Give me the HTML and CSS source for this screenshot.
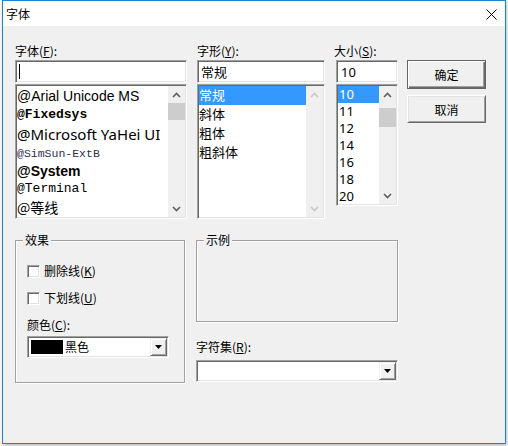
FILE: index.html
```html
<!DOCTYPE html>
<html>
<head>
<meta charset="utf-8">
<title>字体</title>
<link rel="stylesheet" href="styles.css">
</head>
<body>
<div class="window">
  <div class="titlebar">
    <span class="title">字体</span>
    <svg class="close" width="11" height="11" viewBox="0 0 11 11"><path d="M0.5 0.5L10.5 10.5M10.5 0.5L0.5 10.5" stroke="#000" stroke-width="1" fill="none"/></svg>
  </div>
  <div class="content">
    <div class="top">
      <div class="col col-font">
        <div class="label">字体(<u>F</u>):</div>
        <div class="edit"><span class="caret"></span></div>
        <div class="list list-font">
          <div class="items">
            <div class="item f-arial">@Arial Unicode MS</div>
            <div class="item f-fixed">@Fixedsys</div>
            <div class="item f-yahei">@Microsoft YaHei UI</div>
            <div class="item f-simsun">@SimSun-ExtB</div>
            <div class="item f-system">@System</div>
            <div class="item f-terminal">@Terminal</div>
            <div class="item f-dengxian">@等线</div>
          </div>
          <div class="scrollbar">
            <div class="arrow"><svg width="9" height="6" viewBox="0 0 9 6"><polyline points="1,5 4.5,1.5 8,5" fill="none" stroke="#606060" stroke-width="1.6"/></svg></div>
            <div class="track"><div class="thumb"></div></div>
            <div class="arrow"><svg width="9" height="6" viewBox="0 0 9 6"><polyline points="1,1 4.5,4.5 8,1" fill="none" stroke="#606060" stroke-width="1.6"/></svg></div>
          </div>
        </div>
      </div>
      <div class="col col-style">
        <div class="label">字形(<u>Y</u>):</div>
        <div class="edit"><span class="edit-text cjk">常规</span></div>
        <div class="list list-style">
          <div class="items">
            <div class="item s-item selected">常规</div>
            <div class="item s-item">斜体</div>
            <div class="item s-item">粗体</div>
            <div class="item s-item">粗斜体</div>
          </div>
          <div class="scrollbar">
            <div class="arrow"><svg width="9" height="6" viewBox="0 0 9 6"><polyline points="1,5 4.5,1.5 8,5" fill="none" stroke="#c8c8c8" stroke-width="1.6"/></svg></div>
            <div class="track"></div>
            <div class="arrow"><svg width="9" height="6" viewBox="0 0 9 6"><polyline points="1,1 4.5,4.5 8,1" fill="none" stroke="#c8c8c8" stroke-width="1.6"/></svg></div>
          </div>
        </div>
      </div>
      <div class="col col-size">
        <div class="label label-size">大小(<u>S</u>):</div>
        <div class="edit"><span class="edit-text num">10</span></div>
        <div class="list list-size">
          <div class="items">
            <div class="item z-item selected">10</div>
            <div class="item z-item">11</div>
            <div class="item z-item">12</div>
            <div class="item z-item">14</div>
            <div class="item z-item">16</div>
            <div class="item z-item">18</div>
            <div class="item z-item">20</div>
          </div>
          <div class="scrollbar">
            <div class="arrow"><svg width="9" height="6" viewBox="0 0 9 6"><polyline points="1,5 4.5,1.5 8,5" fill="none" stroke="#606060" stroke-width="1.6"/></svg></div>
            <div class="track"><div class="thumb thumb-size"></div></div>
            <div class="arrow"><svg width="9" height="6" viewBox="0 0 9 6"><polyline points="1,1 4.5,4.5 8,1" fill="none" stroke="#606060" stroke-width="1.6"/></svg></div>
          </div>
        </div>
      </div>
      <div class="col col-buttons">
        <div class="btn btn-default">确定</div>
        <div class="btn btn-cancel">取消</div>
      </div>
    </div>
    <div class="bottom">
      <div class="group group-effects">
        <span class="legend">效果</span>
        <div class="check-row"><span class="checkbox"></span><span class="check-label">删除线(<u>K</u>)</span></div>
        <div class="check-row row-two"><span class="checkbox"></span><span class="check-label">下划线(<u>U</u>)</span></div>
        <div class="label label-color">颜色(<u>C</u>):</div>
        <div class="combo combo-color">
          <div class="combo-value"><span class="swatch"></span><span class="color-name">黑色</span></div>
          <div class="drop-btn"><svg width="7" height="4" viewBox="0 0 7 4"><polygon points="0,0 7,0 3.5,4" fill="#000"/></svg></div>
        </div>
      </div>
      <div class="col col-sample">
        <div class="group group-sample">
          <span class="legend">示例</span>
        </div>
        <div class="label label-charset">字符集(<u>R</u>):</div>
        <div class="combo combo-charset">
          <div class="combo-value"></div>
          <div class="drop-btn"><svg width="7" height="4" viewBox="0 0 7 4"><polygon points="0,0 7,0 3.5,4" fill="#000"/></svg></div>
        </div>
      </div>
    </div>
  </div>
</div>
</body>
</html>
```

FILE: styles.css
```css
* { box-sizing: border-box; }
html, body { margin: 0; padding: 0; }
body {
  width: 508px;
  height: 446px;
  background: #ffffff;
  font-family: "Noto Sans CJK SC", "Noto Sans", sans-serif;
  font-size: 12px;
  color: #000;
  overflow: hidden;
}
u { text-decoration: underline; text-underline-offset: 1px; }

.window {
  margin-left: 2px;
  width: 504px;
  height: 444px;
  border: 1px solid #1883d7;
  background: #f0f0f0;
  box-shadow: 1px 2px 4px rgba(0, 0, 0, 0.28);
  display: flex;
  flex-direction: column;
}
.titlebar {
  height: 25px;
  flex: none;
  background: #fff;
  display: flex;
  align-items: center;
  justify-content: space-between;
  padding: 0 8px 0 3px;
}
.title { font-size: 12px; line-height: 16px; }
.close { display: block; margin-top: 1px; }

.content { flex: 1; padding: 17px 0 0 12px; }

.top { display: flex; align-items: flex-start; }
.col { display: flex; flex-direction: column; }
.col-font { width: 172px; }
.col-style { width: 128px; margin-left: 10px; }
.col-size { width: 62px; margin-left: 11px; }
.col-buttons { width: 79px; margin-left: 9px; padding-top: 17px; }

.label { height: 17px; line-height: 16px; font-size: 12px; white-space: nowrap; }
.label-size { margin-left: -2px; }

.edit {
  height: 23px;
  background: #fff;
  border: 1px solid;
  border-color: #a0a0a0 #ffffff #ffffff #a0a0a0;
  box-shadow: inset 1px 1px 0 #696969, inset -1px -1px 0 #e3e3e3;
  display: flex;
  align-items: center;
  padding-left: 3px;
}
.caret { width: 1px; height: 15px; background: #000; }
.edit-text { line-height: 18px; }
.edit-text.cjk { font-size: 13px; }
.edit-text.num { font-family: "Noto Sans", sans-serif; font-size: 13px; margin-left: 1px; }

.list {
  margin-top: 1px;
  background: #fff;
  border: 1px solid;
  border-color: #a0a0a0 #ffffff #ffffff #a0a0a0;
  box-shadow: inset 1px 1px 0 #696969, inset -1px -1px 0 #e3e3e3;
  padding: 1px;
  display: flex;
  overflow: hidden;
}
.list-font { height: 135px; }
.list-style { height: 135px; }
.list-size { height: 122px; }
.items { flex: 1; overflow: hidden; }
.item { white-space: nowrap; display: flex; align-items: center; line-height: 1.15; }

.f-arial { height: 21px; font-family: "Liberation Sans", sans-serif; font-size: 14px; }
.f-fixed { height: 17px; font-family: "Liberation Mono", monospace; font-size: 13px; font-weight: bold; }
.f-yahei { height: 21px; font-family: "Noto Sans", sans-serif; font-size: 15px; }
.f-simsun { height: 17px; font-family: "Liberation Mono", monospace; font-size: 11.5px; color: #2c3050; }
.f-system { height: 19px; font-family: "Liberation Sans", sans-serif; font-size: 14px; font-weight: bold; }
.f-terminal { height: 17px; font-family: "Liberation Mono", monospace; font-size: 13px; }
.f-dengxian { height: 19px; font-family: "Noto Sans CJK SC", sans-serif; font-size: 14px; }

.s-item { height: 19px; font-size: 13px; }
.z-item { height: 17px; font-family: "Noto Sans", sans-serif; font-size: 13px; padding-left: 1px; }
.selected { background: #3399ff; color: #fff; }

.scrollbar {
  width: 17px;
  flex: none;
  background: #f0f0f0;
  display: flex;
  flex-direction: column;
}
.arrow { height: 17px; flex: none; display: flex; align-items: center; justify-content: center; }
.arrow svg { display: block; }
.track { flex: 1; }
.thumb { height: 17px; background: #cdcdcd; }
.thumb-size { height: 19px; margin-top: 5px; }

.btn {
  height: 28px;
  display: flex;
  align-items: center;
  justify-content: center;
  font-size: 12px;
  background: #f0f0f0;
}
.btn-default {
  height: 29px;
  border: 1px solid #646464;
  box-shadow: inset 1px 1px 0 #ffffff, inset -1px -1px 0 #696969, inset -2px -2px 0 #a0a0a0;
}
.btn-cancel {
  margin-top: 6px;
  border: 1px solid;
  border-color: #ffffff #696969 #696969 #ffffff;
  box-shadow: inset 1px 1px 0 #e3e3e3, inset -1px -1px 0 #a0a0a0;
}

.bottom { display: flex; align-items: flex-start; margin-top: 21px; }
.group {
  position: relative;
  border: 1px solid #a0a0a0;
  box-shadow: 1px 1px 0 #ffffff, inset 1px 1px 0 #ffffff;
}
.legend {
  position: absolute;
  top: -9px;
  left: 7px;
  padding: 0 2px;
  background: #f0f0f0;
  line-height: 16px;
  font-size: 12px;
}
.group-effects { width: 170px; height: 143px; padding: 22px 0 0 11px; }
.check-row { height: 16px; display: flex; align-items: center; }
.row-two { margin-top: 11px; }
.checkbox {
  width: 13px;
  height: 13px;
  background: #fff;
  border: 1px solid;
  border-color: #a0a0a0 #ffffff #ffffff #a0a0a0;
  box-shadow: inset 1px 1px 0 #696969, inset -1px -1px 0 #e3e3e3;
  margin-right: 4px;
}
.check-label { line-height: 16px; }
.label-color { margin-top: 11px; height: 16px; }

.combo {
  height: 22px;
  background: #fff;
  border: 1px solid;
  border-color: #a0a0a0 #ffffff #ffffff #a0a0a0;
  box-shadow: inset 1px 1px 0 #696969, inset -1px -1px 0 #e3e3e3;
  padding: 1px;
  display: flex;
}
.combo-color { width: 142px; margin-top: 3px; }
.combo-value { flex: 1; display: flex; align-items: center; padding-left: 2px; }
.swatch { width: 32px; height: 14px; background: #000; margin-right: 2px; }
.color-name { line-height: 16px; font-size: 12px; }
.drop-btn {
  width: 17px;
  flex: none;
  background: #f0f0f0;
  border: 1px solid;
  border-color: #f0f0f0 #696969 #696969 #f0f0f0;
  box-shadow: inset 1px 1px 0 #ffffff, inset -1px -1px 0 #a0a0a0;
  display: flex;
  align-items: center;
  justify-content: center;
}
.drop-btn svg { display: block; }

.col-sample { width: 202px; margin-left: 11px; }
.group-sample { width: 202px; height: 82px; }
.label-charset { margin-top: 17px; height: 16px; }
.combo-charset { width: 202px; margin-top: 5px; }
```
